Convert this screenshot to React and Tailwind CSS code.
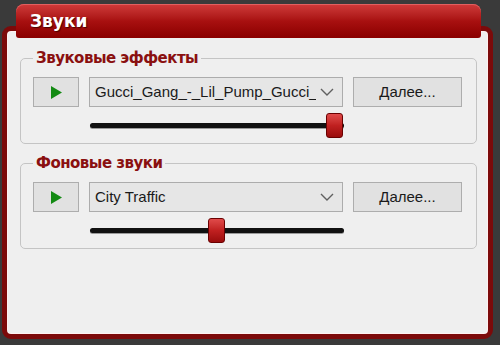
import React from "react";

function Play() {
  return (
    <button className="w-[46px] h-[30px] bg-[#e1e1e1] border border-[#adadad] flex items-center justify-center">
      <svg width="11" height="13" viewBox="0 0 11 13">
        <polygon points="0,0 11,6.5 0,13" fill="#138a13" />
      </svg>
    </button>
  );
}

function Select({ text }) {
  return (
    <div className="w-[254px] h-[30px] bg-[#e6e6e6] border border-[#acacac] flex items-center pl-[5px] pr-[6px]">
      <span className="flex-1 overflow-hidden whitespace-nowrap text-[15px] text-[#1a1a1a] leading-[20px]">{text}</span>
      <svg width="14" height="8" viewBox="0 0 14 8" className="ml-[4px] mr-[2px] shrink-0">
        <polyline points="1,1 7,7 13,1" fill="none" stroke="#606060" strokeWidth="1.4" />
      </svg>
    </div>
  );
}

function More() {
  return (
    <button className="w-[109px] h-[30px] bg-[#e1e1e1] border border-[#adadad] flex items-center justify-center text-[15px] text-[#1a1a1a] leading-[20px]">
      Далее...
    </button>
  );
}

function Slider({ left }) {
  return (
    <div className="relative w-[254px] h-[25px] ml-[57px]">
      <div className="absolute left-0 right-0 top-[10px] h-[5px] rounded-full bg-[#111] shadow-[0_1px_0_#9a9a9a]" />
      <div
        className="absolute top-0 w-[17px] h-[25px] rounded-[3px] border border-[#6a0000] bg-gradient-to-b from-[#e04a4a] via-[#c02020] to-[#9a0c0c]"
        style={{ left }}
      />
    </div>
  );
}

function Group({ title, text, thumb, mt }) {
  return (
    <fieldset className={`ml-[13px] w-[457px] border border-[#c4c4c4] rounded-[5px] px-[12px] pb-[5px] ${mt}`}>
      <legend className="px-[3px] text-[15px] leading-[20px] font-bold text-[#8a1010] tracking-[-0.5px]" style={{ fontFamily: '"DejaVu Sans", sans-serif' }}>
        {title}
      </legend>
      <div className="pt-[9px] flex gap-[10px]">
        <Play />
        <Select text={text} />
        <More />
      </div>
      <div className="mt-[6px]">
        <Slider left={thumb} />
      </div>
    </fieldset>
  );
}

export default function App() {
  return (
    <div className="w-[500px] h-[345px] bg-[#3a3a3a] overflow-hidden pt-[4px]" style={{ fontFamily: '"Liberation Sans", Arial, sans-serif' }}>
      <div className="relative z-10 ml-[16px] w-[465px] h-[34px] rounded-t-[8px] rounded-b-[3px] bg-gradient-to-b from-[#cf3a3a] via-[#a81010] to-[#8a0000] shadow-[inset_0_1px_0_#e06060] flex items-center pl-[14px]">
        <span className="text-white font-bold text-[17px] leading-none [text-shadow:1px_1px_1px_#4a0000]" style={{ fontFamily: '"DejaVu Sans", sans-serif' }}>
          Звуки
        </span>
      </div>
      <div className="-mt-[12px] ml-[2px] w-[491px] h-[313px] border-[5px] border-[#7c0a0a] rounded-[9px] bg-[#efefef] shadow-[inset_0_0_0_1px_#fff0f0] pt-[17px]">
        <Group title="Звуковые эффекты" text="Gucci_Gang_-_Lil_Pump_Gucci_Gang" thumb="236px" mt="" />
        <Group title="Фоновые звуки" text="City Traffic" thumb="118px" mt="mt-[9px]" />
      </div>
    </div>
  );
}
